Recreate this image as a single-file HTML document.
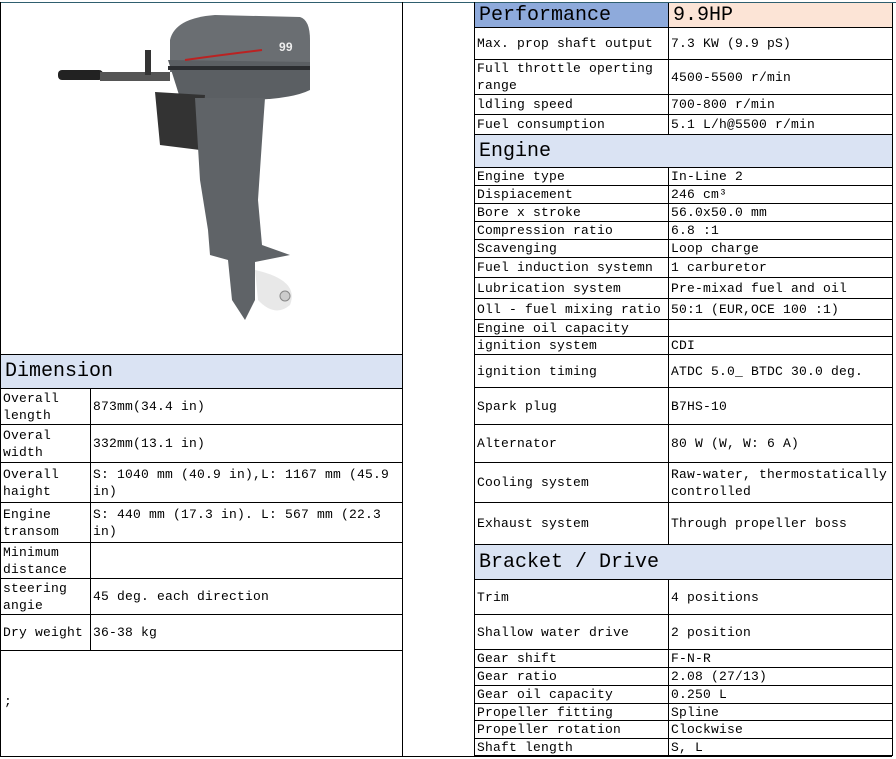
<!DOCTYPE html>
<html><head><meta charset="utf-8"><style>
*{box-sizing:border-box;margin:0;padding:0}
body{width:896px;height:759px;background:#fff;position:relative;overflow:hidden;font-family:"Liberation Mono","Noto Sans CJK SC",monospace;font-size:13px;letter-spacing:0.2px;color:#000}
.t{position:absolute;border-left:1px solid #000;border-right:1px solid #000}
.r{display:flex;border-bottom:1px solid #000}
.c{display:flex;align-items:center;padding-left:2px;line-height:17px;overflow:hidden}
.k{border-right:1px solid #000}
.h{font-size:20px;font-family:"Liberation Mono",monospace;letter-spacing:0;padding-left:4px}
</style></head><body>
<div style="position:absolute;left:0;top:2px;width:896px;height:1px;background:#2f5f6f"></div>
<div style="position:absolute;left:402px;top:2px;width:1px;height:754px;background:#000"></div>
<div style="position:absolute;left:474px;top:2px;width:1px;height:754px;background:#000"></div>
<div style="position:absolute;left:0;top:756px;width:892px;height:1px;background:#000"></div>

<svg style="position:absolute;left:55px;top:8px" width="260" height="330" viewBox="55 8 260 330">
<rect x="58" y="70" width="45" height="10" rx="4" fill="#222"/>
<rect x="100" y="72" width="70" height="9" fill="#555"/>
<rect x="145" y="50" width="6" height="25" fill="#333"/>
<path d="M170 40 Q175 18 215 15 L300 17 Q310 20 310 40 L310 70 L170 72 Z" fill="#6a6e72"/>
<path d="M168 60 L310 62 L310 90 Q290 100 240 100 L180 98 Z" fill="#5b5f63"/>
<rect x="168" y="66" width="142" height="4" fill="#2b2d30"/>
<path d="M185 60 Q220 55 262 50" stroke="#b22" stroke-width="2" fill="none"/>
<text x="279" y="51" font-family="Liberation Sans,sans-serif" font-weight="bold" font-size="12" fill="#eee">99</text>
<path d="M155 92 L205 95 L200 150 L160 145 Z" fill="#333"/>
<path d="M195 98 L265 98 Q262 140 258 200 L262 245 L290 255 L255 262 L255 300 L245 320 L232 300 L228 260 L210 255 L208 230 L200 180 Z" fill="#5f6367"/>
<path d="M255 270 Q300 280 290 305 Q275 318 258 300 Z" fill="#e8e8e8"/>
<circle cx="285" cy="296" r="5" fill="#ccc" stroke="#888"/>
</svg>

<div class="t" style="left:0;top:354px;width:403px;border-top:1px solid #000">
<div class="r" style="height:34px;background:#dae3f3"><div class="c h" style="width:401px">Dimension</div></div>
<div class="r" style="height:36px"><div class="c k" style="width:90px">Overall<br>length</div><div class="c">873mm(34.4 in)</div></div>
<div class="r" style="height:38px"><div class="c k" style="width:90px">Overal<br>width</div><div class="c">332mm(13.1 in)</div></div>
<div class="r" style="height:40px"><div class="c k" style="width:90px">Overall<br>haight</div><div class="c" style="width:310px">S: 1040 mm (40.9 in),L: 1167 mm (45.9 in)</div></div>
<div class="r" style="height:40px"><div class="c k" style="width:90px">Engine<br>transom</div><div class="c" style="width:310px">S: 440 mm (17.3 in). L: 567 mm (22.3 in)</div></div>
<div class="r" style="height:36px"><div class="c k" style="width:90px">Minimum<br>distance</div><div class="c"></div></div>
<div class="r" style="height:36px"><div class="c k" style="width:90px">steering<br>angie</div><div class="c">45 deg. each direction</div></div>
<div class="r" style="height:36px"><div class="c k" style="width:90px">Dry weight</div><div class="c">36-38 kg</div></div>
</div>
<div style="position:absolute;left:0;top:2px;width:1px;height:754px;background:#000"></div>
<div style="position:absolute;left:4px;top:694px">;</div>

<div class="t" style="left:474px;top:3px;width:419px">
<div class="r" style="height:25px"><div class="c k h" style="width:194px;background:#8eaadb">Performance</div><div class="c h" style="flex:1;background:#fce4d6">9.9HP</div></div>
<div class="r" style="height:32px"><div class="c k" style="width:194px">Max. prop shaft output</div><div class="c">7.3 KW (9.9 pS)</div></div>
<div class="r" style="height:35px"><div class="c k" style="width:194px">Full throttle operting range</div><div class="c">4500-5500 r/min</div></div>
<div class="r" style="height:20px"><div class="c k" style="width:194px">ldling speed</div><div class="c">700-800 r/min</div></div>
<div class="r" style="height:20px"><div class="c k" style="width:194px">Fuel consumption</div><div class="c">5.1 L/h@5500 r/min</div></div>
<div class="r" style="height:33px;background:#dae3f3"><div class="c h" style="width:417px">Engine</div></div>
<div class="r" style="height:18px"><div class="c k" style="width:194px">Engine type</div><div class="c">In-Line 2</div></div>
<div class="r" style="height:18px"><div class="c k" style="width:194px">Dispiacement</div><div class="c">246 cm³</div></div>
<div class="r" style="height:18px"><div class="c k" style="width:194px">Bore x stroke</div><div class="c">56.0x50.0 mm</div></div>
<div class="r" style="height:18px"><div class="c k" style="width:194px">Compression ratio</div><div class="c">6.8 :1</div></div>
<div class="r" style="height:18px"><div class="c k" style="width:194px">Scavenging</div><div class="c">Loop charge</div></div>
<div class="r" style="height:20px"><div class="c k" style="width:194px">Fuel induction systemn</div><div class="c">1 carburetor</div></div>
<div class="r" style="height:21px"><div class="c k" style="width:194px">Lubrication system</div><div class="c">Pre-mixad fuel and oil</div></div>
<div class="r" style="height:21px"><div class="c k" style="width:194px">Oll - fuel mixing ratio</div><div class="c">50:1 (EUR,OCE 100 :1)</div></div>
<div class="r" style="height:17px"><div class="c k" style="width:194px">Engine oil capacity</div><div class="c"></div></div>
<div class="r" style="height:18px"><div class="c k" style="width:194px">ignition system</div><div class="c">CDI</div></div>
<div class="r" style="height:33px"><div class="c k" style="width:194px">ignition timing</div><div class="c">ATDC 5.0_ BTDC 30.0 deg.</div></div>
<div class="r" style="height:37px"><div class="c k" style="width:194px">Spark plug</div><div class="c">B7HS-10</div></div>
<div class="r" style="height:38px"><div class="c k" style="width:194px">Alternator</div><div class="c">80 W (W, W: 6 A)</div></div>
<div class="r" style="height:40px"><div class="c k" style="width:194px">Cooling system</div><div class="c" style="width:222px">Raw-water, thermostatically controlled</div></div>
<div class="r" style="height:42px"><div class="c k" style="width:194px">Exhaust system</div><div class="c">Through propeller boss</div></div>
<div class="r" style="height:35px;background:#dae3f3"><div class="c h" style="width:417px">Bracket / Drive</div></div>
<div class="r" style="height:35px"><div class="c k" style="width:194px">Trim</div><div class="c">4 positions</div></div>
<div class="r" style="height:35px"><div class="c k" style="width:194px">Shallow water drive</div><div class="c">2 position</div></div>
<div class="r" style="height:18px"><div class="c k" style="width:194px">Gear shift</div><div class="c">F-N-R</div></div>
<div class="r" style="height:18px"><div class="c k" style="width:194px">Gear ratio</div><div class="c">2.08 (27/13)</div></div>
<div class="r" style="height:18px"><div class="c k" style="width:194px">Gear oil capacity</div><div class="c">0.250 L</div></div>
<div class="r" style="height:17px"><div class="c k" style="width:194px">Propeller fitting</div><div class="c">Spline</div></div>
<div class="r" style="height:18px"><div class="c k" style="width:194px">Propeller rotation</div><div class="c">Clockwise</div></div>
<div class="r" style="height:17px"><div class="c k" style="width:194px">Shaft length</div><div class="c">S, L</div></div>
</div>
</body></html>
